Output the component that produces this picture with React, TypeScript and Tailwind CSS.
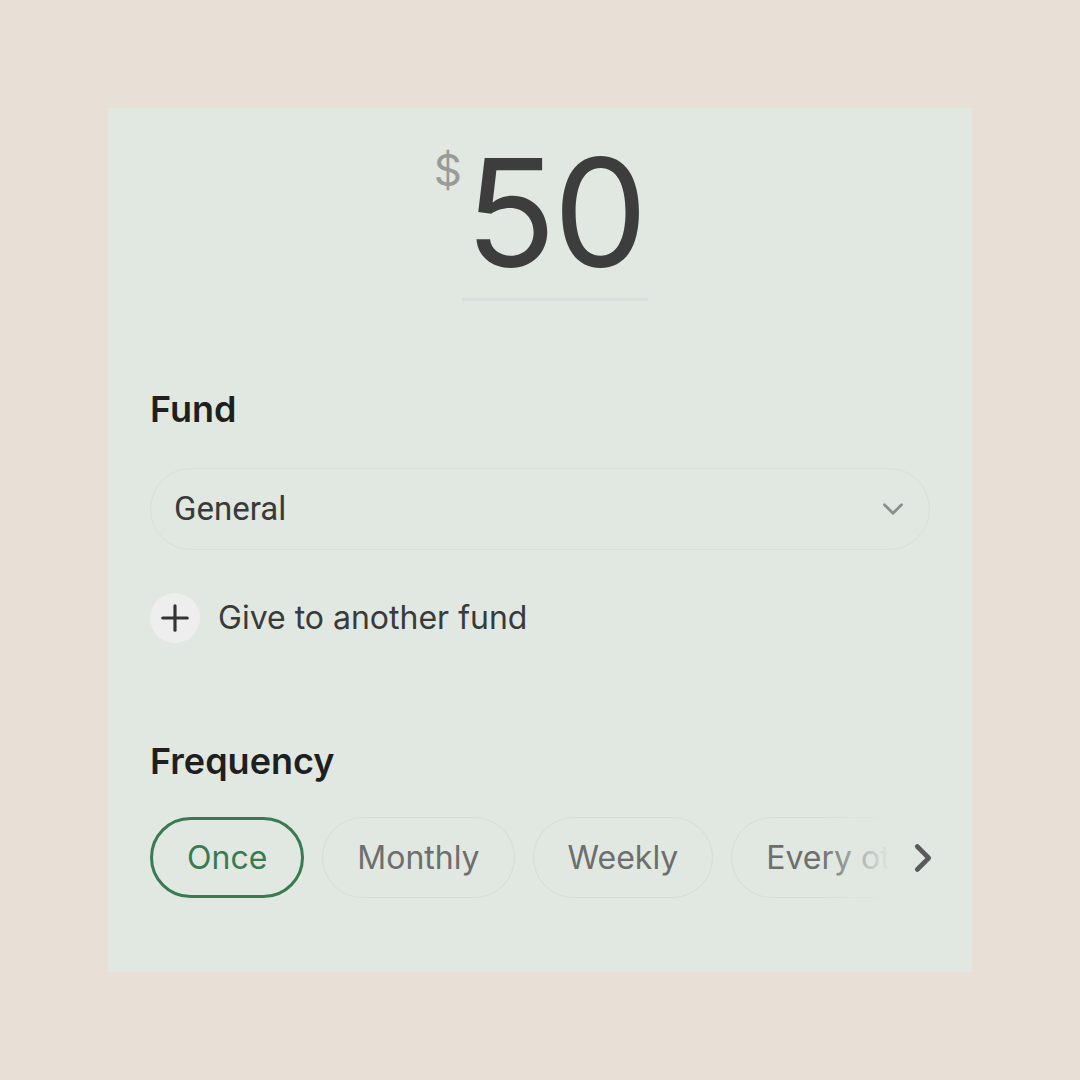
import { Plus, ChevronDown, ChevronRight } from 'lucide-react'

const options = ['Once', 'Monthly', 'Weekly', 'Every other week']

export default function App() {
  return (
    <div className="flex h-screen w-full items-center justify-center bg-[#e8e0d6] font-['Inter',sans-serif]">
      <div className="flex h-[864px] w-[864px] flex-col bg-[#e0e8e1] px-[42px]">
        {/* Amount */}
        <div className="mt-[30px] grid grid-cols-[1fr_auto_1fr] pl-[30px]">
          <div className="flex justify-end">
            <span className="mt-[10px] text-[44px] leading-none text-[#9a9a9a]">$</span>
          </div>
          <div className="flex flex-col items-center">
            <span className="text-[150px] leading-none tracking-[-3px] text-[#3d3d3d]">50</span>
            <div className="mt-[10px] h-[3px] w-[186px] rounded-full bg-[#d8dcda]" />
          </div>
          <div />
        </div>

        {/* Fund */}
        <h2 className="mt-[90px] text-[36px] font-semibold leading-none text-[#1f1f1f]">Fund</h2>
        <button className="mt-[41px] flex h-[82px] w-full items-center justify-between rounded-full border border-[#d9dfda] pl-[23px] pr-[19px] text-left">
          <span className="font-['Roboto',sans-serif] text-[33px] text-[#3a3a3a]">General</span>
          <ChevronDown className="h-[34px] w-[34px] text-[#8f8f8f]" strokeWidth={2} />
        </button>

        <button className="mt-[43px] flex items-center gap-[18px]">
          <span className="flex h-[50px] w-[50px] items-center justify-center rounded-full bg-[#eeeeee]">
            <Plus className="h-[42px] w-[42px] text-[#333333]" strokeWidth={1.8} />
          </span>
          <span className="text-[32px] text-[#3a3a3a]">Give to another fund</span>
        </button>

        {/* Frequency */}
        <h2 className="mt-[100px] text-[36px] font-semibold leading-none text-[#1f1f1f]">Frequency</h2>
        <div className="relative mt-[38px] flex items-center">
          <div className="flex w-[740px] shrink-0 gap-[18px] overflow-hidden">
            {options.map((o, i) => (
              <button
                key={o}
                className={
                  i === 0
                    ? 'h-[81px] shrink-0 rounded-full border-[3px] border-[#3a7a50] px-[34px] text-[32px] text-[#3a7a50]'
                    : 'h-[81px] shrink-0 rounded-full border border-[#d8dcd9] px-[34px] text-[32px] text-[#6e6e6e]'
                }
              >
                {o}
              </button>
            ))}
          </div>
          <div className="pointer-events-none absolute top-0 left-[670px] h-[81px] w-[70px] bg-gradient-to-r from-[#e0e8e1]/0 to-[#e0e8e1]" />
          <ChevronRight className="ml-[10px] h-[46px] w-[46px] shrink-0 text-[#5a5a5a]" strokeWidth={2.4} />
        </div>
      </div>
    </div>
  )
}
